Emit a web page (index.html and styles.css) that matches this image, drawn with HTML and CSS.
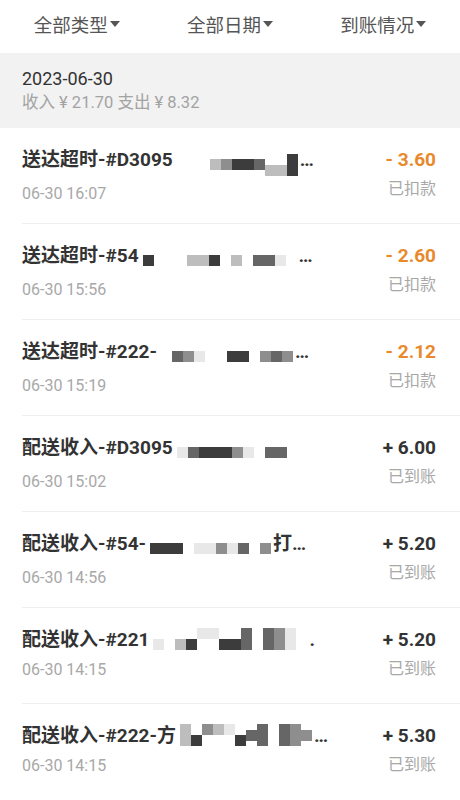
FILE: index.html
```html
<!DOCTYPE html>
<html lang="zh-CN">
<head>
    <meta charset="UTF-8">
    <meta name="viewport" content="width=device-width, initial-scale=1.0">
    <title>账单明细</title>
    <link rel="stylesheet" href="styles.css">
</head>
<body>
    <div class="filters">
        <div class="filter">全部类型<span class="caret"></span></div>
        <div class="filter">全部日期<span class="caret"></span></div>
        <div class="filter">到账情况<span class="caret"></span></div>
    </div>

    <div class="day-head">
        <div class="day-date">2023-06-30</div>
        <div class="day-sum">收入 ¥ 21.70 支出 ¥ 8.32</div>
    </div>

    <ul class="bill-list">
        <li class="bill">
            <div class="bill-main">
                <div class="bill-title">送达超时-#D3095<span class="mosaic"><i class="c"></i><i class="c"></i><i class="c"></i><i class="c s2"></i><i class="c s3"></i><i class="c s5"></i><i class="c s5"></i><i class="c s4"></i><i class="c s2 lo"></i><i class="c s2 lo"></i><i class="c s5 tall"></i></span>…</div>
                <div class="bill-time">06-30 16:07</div>
            </div>
            <div class="bill-side">
                <div class="amount minus">- 3.60</div>
                <div class="status">已扣款</div>
            </div>
        </li>
        <li class="bill">
            <div class="bill-main">
                <div class="bill-title">送达超时-#54<span class="mosaic"><i class="c s5"></i><i class="c"></i><i class="c"></i><i class="c"></i><i class="c s2"></i><i class="c s2"></i><i class="c s5"></i><i class="c"></i><i class="c s2"></i><i class="c"></i><i class="c s4"></i><i class="c s4"></i><i class="c s1"></i><i class="c"></i></span>…</div>
                <div class="bill-time">06-30 15:56</div>
            </div>
            <div class="bill-side">
                <div class="amount minus">- 2.60</div>
                <div class="status">已扣款</div>
            </div>
        </li>
        <li class="bill">
            <div class="bill-main">
                <div class="bill-title">送达超时-#222-<span class="mosaic"><i class="c"></i><i class="c s4"></i><i class="c s3"></i><i class="c s1"></i><i class="c"></i><i class="c"></i><i class="c s5"></i><i class="c s5"></i><i class="c"></i><i class="c s3"></i><i class="c s4"></i><i class="c s3"></i></span>…</div>
                <div class="bill-time">06-30 15:19</div>
            </div>
            <div class="bill-side">
                <div class="amount minus">- 2.12</div>
                <div class="status">已扣款</div>
            </div>
        </li>
        <li class="bill">
            <div class="bill-main">
                <div class="bill-title">配送收入-#D3095<span class="mosaic"><i class="c s1"></i><i class="c s4"></i><i class="c s5"></i><i class="c s5"></i><i class="c s5"></i><i class="c s3"></i><i class="c s1"></i><i class="c"></i><i class="c s4"></i><i class="c s4"></i></span></div>
                <div class="bill-time">06-30 15:02</div>
            </div>
            <div class="bill-side">
                <div class="amount">+ 6.00</div>
                <div class="status">已到账</div>
            </div>
        </li>
        <li class="bill">
            <div class="bill-main">
                <div class="bill-title">配送收入-#54-<span class="mosaic"><i class="c s5"></i><i class="c s5"></i><i class="c s5"></i><i class="c"></i><i class="c s1"></i><i class="c s1"></i><i class="c s3"></i><i class="c s1"></i><i class="c s4"></i><i class="c"></i><i class="c s3"></i></span>打…</div>
                <div class="bill-time">06-30 14:56</div>
            </div>
            <div class="bill-side">
                <div class="amount">+ 5.20</div>
                <div class="status">已到账</div>
            </div>
        </li>
        <li class="bill">
            <div class="bill-main">
                <div class="bill-title">配送收入-#221<span class="mosaic"><i class="c s1 lo"></i><i class="c"></i><i class="c s2 lo"></i><i class="c s5 lo"></i><i class="c s1 hi"></i><i class="c s1 hi"></i><i class="c s5 lo"></i><i class="c s5 lo"></i><i class="c s4 tall"></i><i class="c"></i><i class="c s4 tall"></i><i class="c s3 tall"></i><i class="c s1 tall"></i><i class="c"></i></span>.</div>
                <div class="bill-time">06-30 14:15</div>
            </div>
            <div class="bill-side">
                <div class="amount">+ 5.20</div>
                <div class="status">已到账</div>
            </div>
        </li>
        <li class="bill">
            <div class="bill-main">
                <div class="bill-title">配送收入-#222-方<span class="mosaic"><i class="c s2 tall"></i><i class="c s5 lo"></i><i class="c s3 hi"></i><i class="c s2 hi"></i><i class="c s1 hi"></i><i class="c s5 lo"></i><i class="c s4"></i><i class="c s4 tall"></i><i class="c"></i><i class="c s4 tall"></i><i class="c s3 tall"></i><i class="c s3"></i></span>…</div>
                <div class="bill-time">06-30 14:15</div>
            </div>
            <div class="bill-side">
                <div class="amount">+ 5.30</div>
                <div class="status">已到账</div>
            </div>
        </li>
    </ul>
</body>
</html>
```

FILE: styles.css
```css
body {
    margin: 0;
    background: #fff;
    font-family: Roboto, "Noto Sans CJK SC", sans-serif;
    color: #333;
}

.filters {
    display: flex;
    height: 53px;
    align-items: center;
}

.filter {
    flex: 1;
    display: flex;
    justify-content: center;
    align-items: center;
    font-size: 18.5px;
    color: #555;
    padding-bottom: 6px;
}

.caret {
    width: 0;
    height: 0;
    margin-left: 2px;
    border-left: 5px solid transparent;
    border-right: 5px solid transparent;
    border-top: 6px solid #555;
}

.day-head {
    background: #f2f2f2;
    height: 75px;
    padding: 14px 22px 0;
    box-sizing: border-box;
}

.day-date {
    font-size: 18px;
    line-height: 24px;
    color: #333;
}

.day-sum {
    font-size: 16.5px;
    line-height: 22px;
    color: #a3a3a3;
    margin-top: 1px;
}

.bill-list {
    list-style: none;
    margin: 0;
    padding: 0;
}

.bill {
    display: flex;
    justify-content: space-between;
    height: 96px;
    box-sizing: border-box;
    margin-left: 22px;
    padding: 20px 24px 0 0;
    border-bottom: 1px solid #efefef;
}

.bill:last-child {
    border-bottom: none;
}

.bill-main {
    min-width: 0;
}

.bill-title {
    font-size: 19px;
    font-weight: bold;
    line-height: 24px;
    white-space: nowrap;
    color: #333;
}

.bill-time {
    margin-top: 8px;
    font-size: 16px;
    line-height: 20px;
    color: #a8a8a8;
}

.mosaic {
    display: inline-flex;
    align-items: center;
    height: 22px;
    vertical-align: -4px;
    margin-left: 4px;
    margin-right: 2px;
}

.c {
    display: block;
    width: 11px;
    height: 11px;
}

.c.lo {
    align-self: flex-end;
}

.c.hi {
    align-self: flex-start;
}

.c.tall {
    height: 22px;
}

.s1 { background: #e8e8e8; }
.s2 { background: #bdbdbd; }
.s3 { background: #8e8e8e; }
.s4 { background: #666; }
.s5 { background: #3c3c3c; }

.bill-side {
    text-align: right;
    flex-shrink: 0;
}

.amount {
    font-size: 19px;
    font-weight: bold;
    line-height: 24px;
    color: #333;
}

.amount.minus {
    color: #e8892b;
}

.status {
    margin-top: 7px;
    font-size: 16px;
    line-height: 20px;
    color: #a8a8a8;
}
```
